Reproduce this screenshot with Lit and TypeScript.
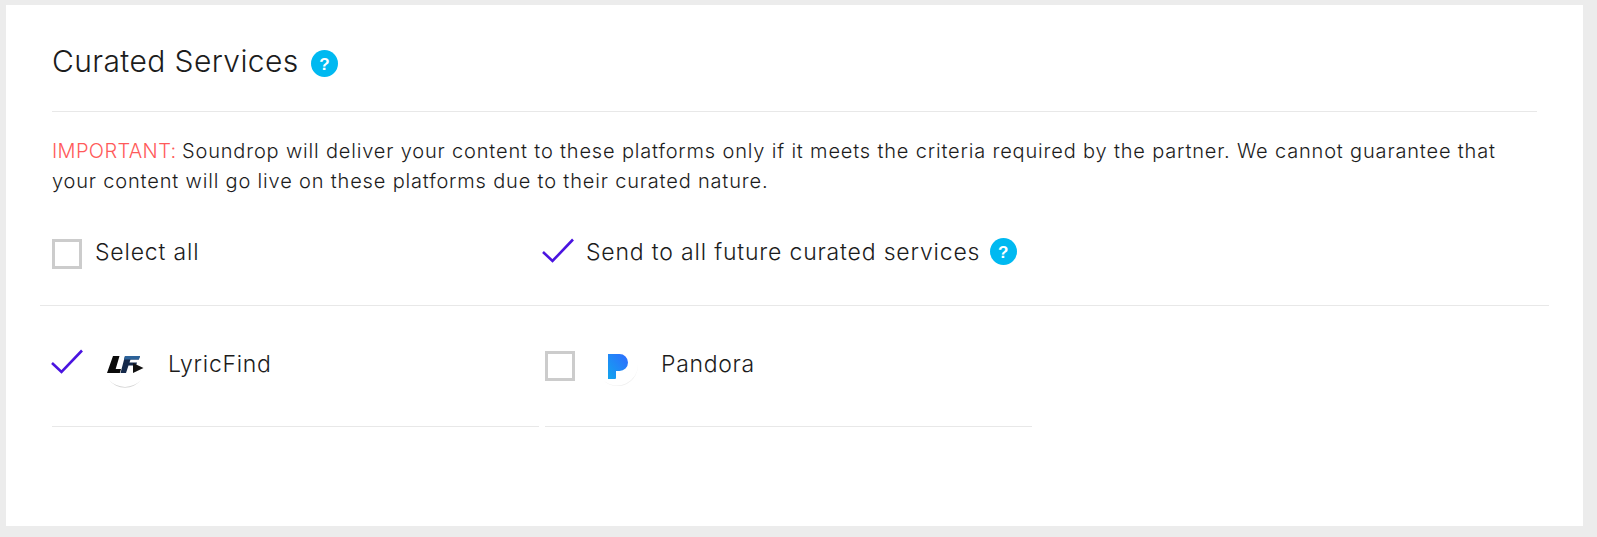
import { LitElement, html, css } from "lit";
import { customElement } from "lit/decorators.js";

const help = (cls: string) => html`<svg class=${cls} viewBox="0 0 27 27"><circle cx="13.5" cy="13.5" r="13.5" fill="#00b9f1"/><text x="13.5" y="19.5" text-anchor="middle" font-family="'Liberation Sans', sans-serif" font-size="17" font-weight="700" fill="#fff">?</text></svg>`;
const tick = html`<svg class="tick" viewBox="0 0 32 25"><path d="M1 14 L10.5 23 L31 1.5" fill="none" stroke="#4a14e0" stroke-width="2.6"/></svg>`;
const lf = html`<svg class="logo" viewBox="0 0 42 42">
  <circle cx="21" cy="21" r="20.5" fill="#fff"/>
  <path d="M5 34 A20.500 20.500 0 0 0 37 34 A22 22 0 0 1 5 34Z" fill="#d4d4d4"/>
  <path d="M9 10h6.500l-3.800 13H17L15.800 27H3Z" fill="#0a0a0a"/>
  <path d="M21 10H36l-1.200 3.500H26.500l-1 3H33l-1 3H24.500L22 27H16.500Z" fill="#15294a"/>
  <path d="M21 10H36l-1.200 3.500H20Z" fill="#2c6299"/>
  <path d="M29 17 L39.500 22 L29 27Z" fill="#111"/>
</svg>`;
const pd = html`<svg class="logo" viewBox="0 0 42 42">
  <defs><linearGradient id="pg" x1="0" y1="1" x2="1" y2="0"><stop offset="0" stop-color="#12a5ee"/><stop offset="1" stop-color="#2f6bff"/></linearGradient></defs>
  <circle cx="21" cy="21" r="20.5" fill="#fff"/>
  <path d="M7 35 A20.500 20.500 0 0 0 41 19 A21 21 0 0 1 7 35Z" fill="#efefef"/>
  <path d="M11 8h11.500a8.500 8.500 0 0 1 0 17H19v7a1 1 0 0 1-1 1h-7Z" fill="url(#pg)"/>
</svg>`;

@customElement("app-root")
export class AppRoot extends LitElement {
  static styles = css`
    :host { display: block; width: 1597px; height: 537px; background: #ececec; font-family: Inter, "Liberation Sans", sans-serif; color: #222; box-sizing: border-box; padding: 5px 14px 11px 6px; overflow: hidden; }
    .card { background: #fff; height: 521px; box-sizing: border-box; padding: 0 34px; }
    .head { height: 107px; box-sizing: border-box; margin: 0 12px; border-bottom: 1px solid #e8e8e8; display: flex; align-items: center; gap: 12px; padding-top: 6px; }
    .head .h { margin-top: 4px; }
    h1 { font-size: 30px; font-weight: 300; margin: 0; letter-spacing: .4px; color: #1c1c1c; }
    .h { width: 27px; height: 27px; flex: none; }
    .note { margin: 24px 12px 0; font-size: 20px; line-height: 30px; font-weight: 300; letter-spacing: .83px; color: #1c1c1c; }
    .note b { color: #ff5a5a; font-weight: 300; letter-spacing: .35px; margin-right: -1px; }
    .all { display: grid; grid-template-columns: 491px 1fr; align-items: center; height: 71px; margin-top: 22px; border-bottom: 1px solid #e8e8e8; box-sizing: content-box; padding-bottom: 16px; }
    .item { display: flex; align-items: center; font-size: 23px; font-weight: 300; letter-spacing: .82px; color: #1c1c1c; }
    .all .item:first-child { padding-left: 12px; }
    .all .item:first-child .box { margin-right: 13px; }
    .all .item:last-child { padding-left: 11px; }
    .all .tick { margin-right: 12px; margin-top: -7px; }
    .all .h { margin-left: 10px; margin-top: -4px; }
    .all .label { margin-top: -4px; }
    .list { display: grid; grid-template-columns: 487px 487px; column-gap: 6px; margin: 0 12px; }
    .svc { height: 120px; border-bottom: 1px solid #e8e8e8; display: flex; align-items: center; font-size: 23px; font-weight: 300; letter-spacing: .7px; color: #1c1c1c; box-sizing: content-box; }
    .svc .tick { margin-left: -1px; margin-right: 21px; margin-top: -10px; }
    .svc .box { margin-right: 22px; }
    .svc .logo { margin-right: 22px; margin-top: 2px; }
    .svc .label { margin-top: -4px; }
    .box { width: 30px; height: 30px; box-sizing: border-box; border: 3px solid #ccc; flex: none; }
    .tick { width: 32px; height: 25px; flex: none; }
    .logo { width: 42px; height: 42px; flex: none; }
  `;
  render() {
    return html`<div class="card">
      <div class="head"><h1>Curated Services</h1>${help("h")}</div>
      <p class="note"><b>IMPORTANT:</b> Soundrop will deliver your content to these platforms only if it meets the criteria required by the partner. We cannot guarantee that your content will go live on these platforms due to their curated nature.</p>
      <div class="all">
        <div class="item"><span class="box"></span><span class="label">Select all</span></div>
        <div class="item">${tick}<span class="label">Send to all future curated services</span>${help("h")}</div>
      </div>
      <div class="list">
        <div class="svc">${tick}${lf}<span class="label">LyricFind</span></div>
        <div class="svc"><span class="box"></span>${pd}<span class="label">Pandora</span></div>
      </div>
    </div>`;
  }
}
